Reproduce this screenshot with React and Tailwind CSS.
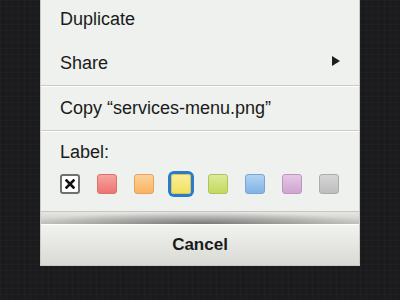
import React from "react"

const swatches = [
  { id: "red", className: "border-[#d9716f] from-[#f7a3a1] to-[#ee7471]" },
  { id: "orange", className: "border-[#e3a35e] from-[#fdd29a] to-[#fbb262]" },
  { id: "yellow", className: "border-[#d9c65a] from-[#f9ef98] to-[#f2e05f]", selected: true },
  { id: "green", className: "border-[#aec35a] from-[#dcea98] to-[#c3d95a]" },
  { id: "blue", className: "border-[#78a6d4] from-[#b2d3f2] to-[#80b3e4]" },
  { id: "purple", className: "border-[#bf94c2] from-[#e6c8e6] to-[#cfa3d2]" },
  { id: "gray", className: "border-[#acacac] from-[#d6d6d6] to-[#bdbdbd]" },
]

const Divider = () => (
  <div>
    <div className="h-px bg-[#c8cac6]" />
    <div className="h-px bg-white" />
  </div>
)

export default function App() {
  return (
    <div className="w-[400px] h-[300px] overflow-hidden bg-[#1b1b1d] [background-image:linear-gradient(rgba(255,255,255,0.015)_1px,transparent_1px),linear-gradient(90deg,rgba(255,255,255,0.015)_1px,transparent_1px)] [background-size:6px_6px] flex justify-center font-['Liberation_Sans',Arial,sans-serif] text-[#1a1a1a]">
      <div className="w-[320px] self-start bg-[#eef1ed] border-x border-b border-[#c9cbc7] flex flex-col">
        {/* Menu items */}
        <div className="h-[41px] pl-[19px] text-[18px] leading-[38px]">Duplicate</div>
        <div className="h-[44px] pl-[19px] pr-[19px] flex items-center justify-between text-[18px] leading-[44px]">
          <span>Share</span>
          <svg width="8" height="10" viewBox="0 0 8 10" className="mb-[4px]">
            <polygon points="0,0 8,5 0,10" fill="#1d1d1d" />
          </svg>
        </div>
        <Divider />
        <div className="h-[43px] pl-[19px] text-[18px] leading-[43px]">Copy “services-menu.png”</div>
        <Divider />

        {/* Label picker */}
        <div className="pt-[8px] pb-[17px] pl-[19px]">
          <div className="text-[18px] leading-[24px]">Label:</div>
          <div className="mt-[10px] flex gap-[17px]">
            <div className="w-[20px] h-[20px] rounded-[3px] border-2 border-[#707070] bg-white flex items-center justify-center">
              <svg width="10" height="10" viewBox="0 0 10 10">
                <path d="M1.5 1.5 L8.5 8.5 M8.5 1.5 L1.5 8.5" stroke="#111" strokeWidth="2.6" strokeLinecap="square" />
              </svg>
            </div>
            {swatches.map((s) => (
              <div
                key={s.id}
                className={`w-[20px] h-[20px] rounded-[3px] border bg-linear-to-b ${s.className} ${
                  s.selected ? "shadow-[0_0_0_3px_#2a7bcc]" : ""
                }`}
              />
            ))}
          </div>
        </div>

        {/* Shadow band */}
        <div className="h-px bg-[#c4c6c2]" />
        <div className="h-[12px] bg-[radial-gradient(ellipse_55%_100%_at_50%_100%,rgba(0,0,0,0.4),transparent),linear-gradient(#e6e7e3,#c6c7c3)]" />
        <div className="h-px bg-white" />

        {/* Cancel */}
        <div className="h-[40px] bg-linear-to-b from-[#f1f3ef] to-[#d9dad6] flex items-center justify-center text-[17px] font-bold">
          Cancel
        </div>
      </div>
    </div>
  )
}
